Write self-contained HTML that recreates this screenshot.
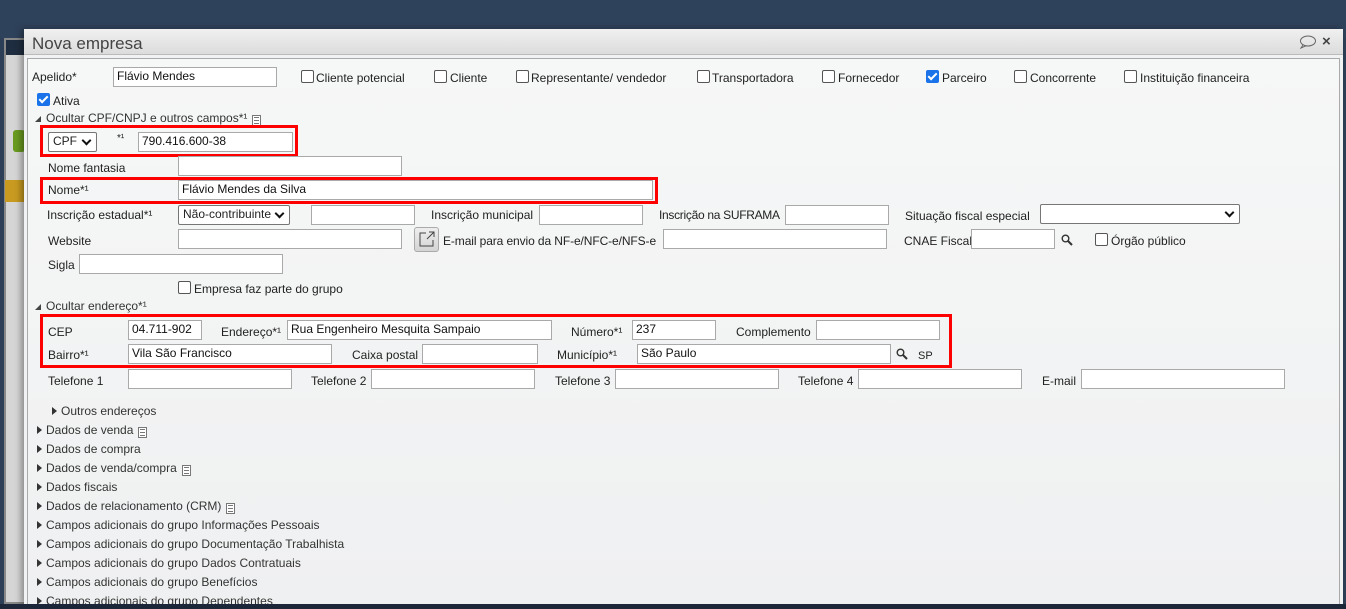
<!DOCTYPE html>
<html><head><meta charset="utf-8"><style>
*{box-sizing:border-box;margin:0;padding:0}
body{width:1346px;height:609px;overflow:hidden;background:#2d3f56;font-family:"Liberation Sans",sans-serif;font-size:12px;color:#222;position:relative}
.a{position:absolute;white-space:nowrap}
.l{position:absolute;white-space:nowrap;line-height:14px}
.i{position:absolute;background:#fff;border:1px solid #a9a9a9;font-size:12px;line-height:17px;padding-left:3px;color:#111}
.cb{position:absolute;width:13px;height:13px;border:1px solid #555;border-radius:2px;background:#fff}
.ck{position:absolute;width:13px;height:13px;border-radius:2px;background:#1a73e8}
.ck:after{content:"";position:absolute;left:4px;top:1px;width:3px;height:7px;border:solid #fff;border-width:0 2px 2px 0;transform:rotate(45deg)}
.sel{position:absolute;background:#fff;border:1px solid #767676;border-radius:2px;padding-left:4px;line-height:17px}
.sel:after{content:"";position:absolute;right:6px;top:4px;width:5px;height:5px;border:solid #111;border-width:0 2px 2px 0;transform:rotate(45deg)}
.red{position:absolute;border:3px solid #f00}
.tri{position:absolute;width:0;height:0;border-top:4px solid transparent;border-bottom:4px solid transparent;border-left:5px solid #333}
.dn{position:absolute;width:0;height:0;border-left:6px solid transparent;border-bottom:6px solid #444}
.sec{position:absolute;line-height:14px;color:#333;white-space:nowrap}
.doc{position:absolute;width:9px;height:11px;border:1px solid #777;background:#fff}
.doc:before{content:"";position:absolute;left:1px;top:1px;width:5px;height:0;border-top:1px solid #777}
.doc:after{content:"";position:absolute;left:1px;top:4px;width:5px;height:2px;border-top:1px solid #777;border-bottom:1px solid #777}
</style></head><body>
<div class="a" style="left:0;top:0;width:1346px;height:38px;background:#2f425b"></div>
<div class="a" style="left:4px;top:38px;width:1338px;height:566px;border:2px solid #888;background:#1f2d40"></div>
<div class="a" style="left:6px;top:55px;width:20px;height:547px;background:#d5d5d5"></div>
<div class="a" style="left:5px;top:180px;width:20px;height:22px;background:#c89a20"></div>
<div class="a" style="left:13px;top:130px;width:12px;height:22px;background:#6a9a20;border-radius:3px"></div>

<div class="a" style="left:24px;top:29px;width:1319px;height:576px;background:#f1f2f3;box-shadow:-3px 0 6px rgba(0,0,0,.35)"></div>
<div class="a" style="left:24px;top:29px;width:1319px;height:26px;background:linear-gradient(#f0f0f0,#dcdcdc);border-bottom:1px solid #bbb"></div>
<div class="a" style="left:32px;top:34px;font-size:17px;color:#444;line-height:20px">Nova empresa</div>
<svg class="a" style="left:1299px;top:35px" width="18" height="14" viewBox="0 0 18 14"><ellipse cx="9" cy="6" rx="7.5" ry="5" fill="none" stroke="#666" stroke-width="1"/><path d="M4 10 L2 13 L7 10.8" fill="none" stroke="#666"/></svg>
<div class="a" style="left:1322px;top:33px;font-size:15px;font-weight:bold;color:#444">×</div>
<div class="a" style="left:27px;top:58px;width:1313px;height:548px;border:1px solid #aaa;border-bottom:none;background:linear-gradient(#f6f7f7,#eff0f1)"></div>

<div class="l" style="left:32px;top:70px">Apelido*</div>
<div class="i" style="left:113px;top:67px;width:164px;height:20px">Flávio Mendes</div>
<div class="cb" style="left:301px;top:70px"></div><div class="l" style="left:316px;top:71px">Cliente potencial</div>
<div class="cb" style="left:434px;top:70px"></div><div class="l" style="left:450px;top:71px">Cliente</div>
<div class="cb" style="left:516px;top:70px"></div><div class="l" style="left:531px;top:71px">Representante/ vendedor</div>
<div class="cb" style="left:697px;top:70px"></div><div class="l" style="left:712px;top:71px">Transportadora</div>
<div class="cb" style="left:822px;top:70px"></div><div class="l" style="left:838px;top:71px">Fornecedor</div>
<div class="ck" style="left:926px;top:70px"></div><div class="l" style="left:942px;top:71px">Parceiro</div>
<div class="cb" style="left:1014px;top:70px"></div><div class="l" style="left:1030px;top:71px">Concorrente</div>
<div class="cb" style="left:1124px;top:70px"></div><div class="l" style="left:1140px;top:71px">Instituição financeira</div>

<div class="ck" style="left:37px;top:93px"></div><div class="l" style="left:53px;top:94px">Ativa</div>
<div class="dn" style="left:35px;top:116px"></div>
<div class="sec" style="left:46px;top:111px">Ocultar CPF/CNPJ e outros campos*¹</div>
<div class="doc" style="left:252px;top:115px"></div>

<div class="red" style="left:40px;top:125px;width:258px;height:32px"></div>
<div class="sel" style="left:48px;top:132px;width:49px;height:20px">CPF</div>
<div class="l" style="left:117px;top:132px;font-size:10px">*¹</div>
<div class="i" style="left:138px;top:132px;width:155px;height:20px">790.416.600-38</div>

<div class="l" style="left:48px;top:161px">Nome fantasia</div>
<div class="i" style="left:178px;top:156px;width:224px;height:20px"></div>
<div class="red" style="left:40px;top:177px;width:618px;height:27px"></div>
<div class="l" style="left:48px;top:183px">Nome*¹</div>
<div class="i" style="left:178px;top:180px;width:475px;height:20px">Flávio Mendes da Silva</div>

<div class="l" style="left:47px;top:208px">Inscrição estadual*¹</div>
<div class="sel" style="left:178px;top:205px;width:112px;height:20px">Não-contribuinte</div>
<div class="i" style="left:311px;top:205px;width:104px;height:20px"></div>
<div class="l" style="left:431px;top:208px">Inscrição municipal</div>
<div class="i" style="left:539px;top:205px;width:104px;height:20px"></div>
<div class="l" style="left:659px;top:208px;letter-spacing:-0.3px">Inscrição na SUFRAMA</div>
<div class="i" style="left:785px;top:205px;width:104px;height:20px"></div>
<div class="l" style="left:905px;top:209px">Situação fiscal especial</div>
<div class="sel" style="left:1040px;top:204px;width:200px;height:20px"></div>

<div class="l" style="left:48px;top:234px">Website</div>
<div class="i" style="left:178px;top:229px;width:224px;height:20px"></div>
<div class="a" style="left:414px;top:227px;width:25px;height:25px;border:1px solid #aaa;border-radius:3px;background:linear-gradient(#eee,#d4d4d4)"></div>
<svg class="a" style="left:418px;top:230px" width="18" height="18" viewBox="0 0 18 18"><path d="M8 3H2V16H15V10" fill="none" stroke="#444"/><path d="M9 9L16 2M11 2H16V7" fill="none" stroke="#444"/></svg>
<div class="l" style="left:443px;top:234px;letter-spacing:-0.1px">E-mail para envio da NF-e/NFC-e/NFS-e</div>
<div class="i" style="left:663px;top:229px;width:224px;height:20px"></div>
<div class="l" style="left:904px;top:234px">CNAE Fiscal</div>
<div class="i" style="left:971px;top:229px;width:84px;height:20px"></div>
<svg class="a" style="left:1061px;top:234px" width="12" height="12" viewBox="0 0 12 12"><circle cx="4.5" cy="4.5" r="3.3" fill="none" stroke="#333" stroke-width="1.4"/><path d="M7 7L11 11" stroke="#333" stroke-width="2"/></svg>
<div class="cb" style="left:1095px;top:233px"></div><div class="l" style="left:1111px;top:234px">Órgão público</div>

<div class="l" style="left:48px;top:258px">Sigla</div>
<div class="i" style="left:79px;top:254px;width:204px;height:20px"></div>
<div class="cb" style="left:178px;top:281px"></div><div class="l" style="left:194px;top:282px">Empresa faz parte do grupo</div>

<div class="dn" style="left:35px;top:304px"></div>
<div class="sec" style="left:46px;top:299px">Ocultar endereço*¹</div>

<div class="red" style="left:40px;top:314px;width:912px;height:54px"></div>
<div class="l" style="left:48px;top:325px">CEP</div>
<div class="i" style="left:128px;top:320px;width:74px;height:20px">04.711-902</div>
<div class="l" style="left:221px;top:325px">Endereço*¹</div>
<div class="i" style="left:287px;top:320px;width:265px;height:20px">Rua Engenheiro Mesquita Sampaio</div>
<div class="l" style="left:571px;top:325px">Número*¹</div>
<div class="i" style="left:632px;top:320px;width:84px;height:20px">237</div>
<div class="l" style="left:736px;top:325px">Complemento</div>
<div class="i" style="left:816px;top:320px;width:124px;height:20px"></div>

<div class="l" style="left:48px;top:348px">Bairro*¹</div>
<div class="i" style="left:128px;top:344px;width:204px;height:20px">Vila São Francisco</div>
<div class="l" style="left:352px;top:348px">Caixa postal</div>
<div class="i" style="left:422px;top:344px;width:116px;height:20px"></div>
<div class="l" style="left:557px;top:348px">Município*¹</div>
<div class="i" style="left:637px;top:344px;width:254px;height:20px">São Paulo</div>
<svg class="a" style="left:896px;top:348px" width="12" height="12" viewBox="0 0 12 12"><circle cx="4.5" cy="4.5" r="3.3" fill="none" stroke="#333" stroke-width="1.4"/><path d="M7 7L11 11" stroke="#333" stroke-width="2"/></svg>
<div class="l" style="left:918px;top:349px;font-size:11px">SP</div>

<div class="l" style="left:48px;top:374px">Telefone 1</div>
<div class="i" style="left:128px;top:369px;width:164px;height:20px"></div>
<div class="l" style="left:311px;top:374px">Telefone 2</div>
<div class="i" style="left:371px;top:369px;width:164px;height:20px"></div>
<div class="l" style="left:555px;top:374px">Telefone 3</div>
<div class="i" style="left:615px;top:369px;width:164px;height:20px"></div>
<div class="l" style="left:798px;top:374px">Telefone 4</div>
<div class="i" style="left:858px;top:369px;width:164px;height:20px"></div>
<div class="l" style="left:1042px;top:374px">E-mail</div>
<div class="i" style="left:1081px;top:369px;width:204px;height:20px"></div>

<div class="tri" style="left:52px;top:407px"></div><div class="sec" style="left:61px;top:404px">Outros endereços</div>
<div class="tri" style="left:37px;top:426px"></div><div class="sec" style="left:46px;top:423px">Dados de venda</div><div class="doc" style="left:138px;top:427px"></div>
<div class="tri" style="left:37px;top:445px"></div><div class="sec" style="left:46px;top:442px">Dados de compra</div>
<div class="tri" style="left:37px;top:464px"></div><div class="sec" style="left:46px;top:461px">Dados de venda/compra</div><div class="doc" style="left:182px;top:465px"></div>
<div class="tri" style="left:37px;top:483px"></div><div class="sec" style="left:46px;top:480px">Dados fiscais</div>
<div class="tri" style="left:37px;top:502px"></div><div class="sec" style="left:46px;top:499px">Dados de relacionamento (CRM)</div><div class="doc" style="left:226px;top:503px"></div>
<div class="tri" style="left:37px;top:521px"></div><div class="sec" style="left:46px;top:518px">Campos adicionais do grupo Informações Pessoais</div>
<div class="tri" style="left:37px;top:540px"></div><div class="sec" style="left:46px;top:537px">Campos adicionais do grupo Documentação Trabalhista</div>
<div class="tri" style="left:37px;top:559px"></div><div class="sec" style="left:46px;top:556px">Campos adicionais do grupo Dados Contratuais</div>
<div class="tri" style="left:37px;top:578px"></div><div class="sec" style="left:46px;top:575px">Campos adicionais do grupo Benefícios</div>
<div class="tri" style="left:37px;top:597px"></div><div class="sec" style="left:46px;top:594px">Campos adicionais do grupo Dependentes</div>
<div class="a" style="left:0;top:604px;width:1346px;height:5px;background:#1b2638"></div>
</body></html>
